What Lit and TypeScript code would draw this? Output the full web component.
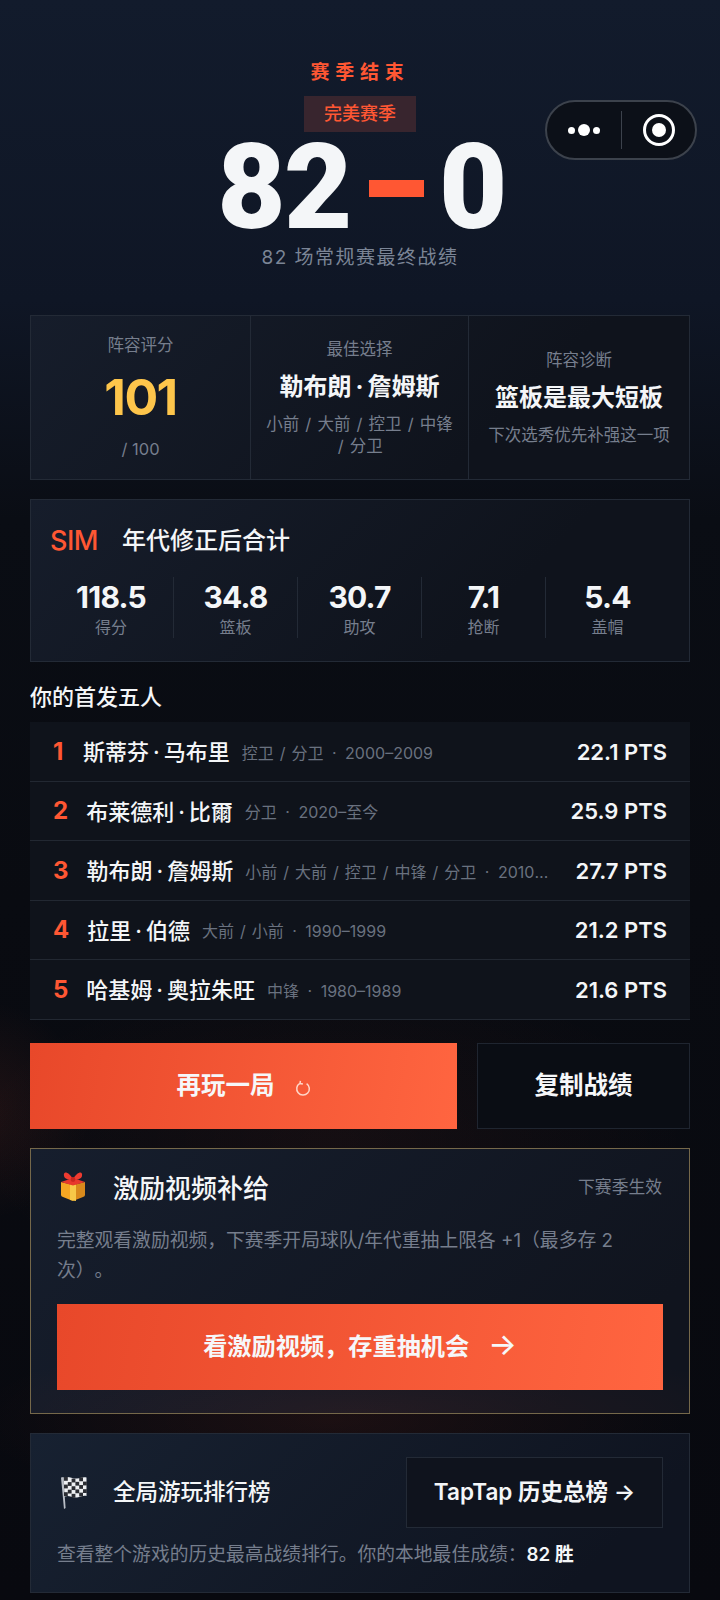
import { LitElement, html, css, svg } from "lit";
import { customElement } from "lit/decorators.js";

const players = [
  { n: "斯蒂芬·马布里", m: "控卫 / 分卫 · 2000–2009", p: "22.1 PTS" },
  { n: "布莱德利·比爾", m: "分卫 · 2020–至今", p: "25.9 PTS" },
  { n: "勒布朗·詹姆斯", m: "小前 / 大前 / 控卫 / 中锋 / 分卫 · 2010–2019", p: "27.7 PTS" },
  { n: "拉里·伯德", m: "大前 / 小前 · 1990–1999", p: "21.2 PTS" },
  { n: "哈基姆·奥拉朱旺", m: "中锋 · 1980–1989", p: "21.6 PTS" },
];
const stats = [
  ["118.5", "得分"],
  ["34.8", "篮板"],
  ["30.7", "助攻"],
  ["7.1", "抢断"],
  ["5.4", "盖帽"],
];

/* The CJK font in the reference sets "·" and "/" wider than Inter does. */
const spaced = (text: string) =>
  text.split(/([·/])/).map((part) =>
    part === "·"
      ? html`<span class="mid">·</span>`
      : part === "/"
      ? html`<span class="slash">/</span>`
      : part
  );

const gift = svg`<svg class="emoji" viewBox="0 0 28 32" width="28" height="32">
  <path d="M2 12 L14 15 L14 31 L4 27 Q2 26.5 2 25 Z" fill="#f5a623"/>
  <path d="M26 12 L14 15 L14 31 L24 27 Q26 26.5 26 25 Z" fill="#d98a1c"/>
  <path d="M11 14.2 L17 14.2 L17 31 L11 30 Z" fill="#f7c948"/>
  <path d="M2 12 L14 8 L26 12 L14 15.5 Z" fill="#e8382c"/>
  <path d="M14 9 C9 1 4 1 5 6 C5.5 9 10 10 14 10 C18 10 22.5 9 23 6 C24 1 19 1 14 9 Z" fill="#ef3b30"/>
  <circle cx="14" cy="9.5" r="2.4" fill="#c9261f"/>
</svg>`;

const flagCells = () => {
  const out = [];
  for (let r = 0; r < 5; r++) {
    for (let c = 0; c < 6; c++) {
      if ((r + c) % 2 === 0) {
        const x = 5 + c * 3.8;
        const wave = Math.sin(c * 1.05) * 1.1;
        const y = 2 + r * 3.8 + c * 0.35 + wave;
        out.push(svg`<rect x="${x}" y="${y}" width="3.8" height="3.8" fill="#2b2d33"/>`);
      }
    }
  }
  return out;
};
const flag = svg`<svg class="emoji" viewBox="0 0 28 36" width="28" height="36">
  <path d="M2 2.5 L4.4 2 L6.6 33 L5 34 Z" fill="#b9bec6"/>
  <path d="M4.5 2.5 C10 0.5 13 4 18 3.5 C22 3.2 24 1.6 27.5 2.5 L27.5 21 C24 20 22 22 18 22.4 C13 23 10 19.6 5.6 21.5 Z" fill="#eef0f3"/>
  ${flagCells()}
</svg>`;

const replay = svg`<svg class="spin" viewBox="0 0 16 16" width="16" height="16" fill="none" stroke="#ffd6c8" stroke-width="1.5">
  <path d="M4.8 3.4 A6.3 6.3 0 1 0 11.6 3.6"/>
  <path d="M5.4 0.8 L5 3.6 L7.9 4.1"/>
</svg>`;

@customElement("app-root")
export class AppRoot extends LitElement {
  static styles = css`
    :host {
      display: block;
      width: 720px;
      height: 1600px;
      overflow: hidden;
      font-family: Inter, "Noto Sans CJK SC", sans-serif;
      color: #f4f6f8;
    }
    * { box-sizing: border-box; }
    .mid { margin: 0 4px; }
    .slash { margin: 0 1.5px; }
    .page {
      position: relative;
      height: 1600px;
      padding: 60px 30px 0;
      background:
        radial-gradient(circle at -20px 1110px, rgba(255, 87, 51, 0.09), transparent 110px),
        radial-gradient(ellipse 360px 170px at 330px 1140px, rgba(255, 87, 51, 0.05), transparent 100%),
        radial-gradient(ellipse 360px 90px at 330px 1420px, rgba(255, 87, 51, 0.08), transparent 100%),
        linear-gradient(180deg, #121b2c 0, #0f1625 300px, #0a0d14 520px, #090b11 900px, #08090f 1600px);
    }
    .capsule {
      position: absolute;
      left: 545px;
      top: 100px;
      width: 152px;
      height: 60px;
      border-radius: 30px;
      border: 2px solid #3c424c;
      background: #0c1018;
      display: flex;
      align-items: center;
    }
    .capsule .dots { width: 74px; display: flex; justify-content: center; align-items: center; gap: 3px; }
    .capsule .dot { width: 7px; height: 7px; border-radius: 50%; background: #fff; }
    .capsule .dot.big { width: 12px; height: 12px; }
    .capsule .sep { width: 1px; height: 38px; background: #3c424c; }
    .capsule .rec { flex: 1; display: flex; justify-content: center; }
    .capsule .ring { width: 32px; height: 32px; border-radius: 50%; border: 3px solid #fff; display: flex; align-items: center; justify-content: center; }
    .capsule .ring i { width: 14px; height: 14px; border-radius: 50%; background: #fff; display: block; }

    .hero { display: flex; flex-direction: column; align-items: center; height: 255px; }
    .eyebrow { font-size: 19px; line-height: 26px; font-weight: 700; letter-spacing: 5.7px; color: #ff5733; }
    .badge { margin-top: 10px; height: 36px; padding: 0 20px; font-size: 18px; line-height: 36px; font-weight: 500; color: #ff5733; background: #38252e; }
    .score { display: flex; align-items: center; font-family: Roboto, Inter, sans-serif; font-size: 118px; line-height: 106px; font-weight: 900; letter-spacing: -1.5px; color: #f4f6f8; margin-left: 3px; height: 106px; margin-top: 3px; }
    .dash { width: 55px; height: 17px; background: #ff5733; margin: 0 15px 0 18px; }
    .sub { font-size: 19px; line-height: 28px; letter-spacing: 1.5px; color: #7b8596; margin-top: 3px; }

    .summary {
      display: grid;
      grid-template-columns: 219px 218px 1fr;
      height: 165px;
      border: 1px solid #232a36;
      background: linear-gradient(135deg, #161d2b, #0f131c 70%);
    }
    .summary > div { display: flex; flex-direction: column; align-items: center; justify-content: center; text-align: center; padding: 0 14px 2px; }
    .summary > div + div { border-left: 1px solid #232a36; }
    .label { font-size: 16.5px; line-height: 24px; color: #767e8d; }
    .rating { font-size: 50px; line-height: 60px; margin: 10px 0; font-weight: 700; color: #fdc54b; letter-spacing: -1.5px; }
    .of { font-size: 16.5px; line-height: 24px; color: #767e8d; }
    .pick { font-size: 24px; line-height: 32px; font-weight: 700; margin: 10px 0 10px; color: #f4f6f8; }
    .desc { font-size: 16.5px; line-height: 22px; color: #767e8d; }

    .sim {
      margin-top: 19px;
      height: 163px;
      border: 1px solid #232a36;
      padding: 20px 18px 0;
      background: linear-gradient(135deg, #161d2b, #0f131c 70%);
    }
    .sim-head { display: flex; align-items: center; gap: 24px; height: 40px; padding: 0 0 3px 1px; }
    .sim-tag { font-size: 27px; font-weight: 500; color: #ff5733; letter-spacing: -0.5px; padding-top: 3px; }
    .sim-title { font-size: 24px; font-weight: 500; color: #f4f6f8; }
    .cells { display: grid; grid-template-columns: repeat(5, 124px); margin-top: 17px; height: 61px; }
    .cell { display: flex; flex-direction: column; align-items: center; }
    .cell + .cell { border-left: 1px solid #232a36; }
    .cell b { font-size: 30px; line-height: 38px; font-weight: 700; letter-spacing: -0.8px; padding-top: 1px; }
    .cell span { font-size: 16px; line-height: 22px; color: #767e8d; }

    .h2 { margin-top: 20px; height: 40px; font-size: 22px; line-height: 30px; font-weight: 500; }

    .list { display: flex; flex-direction: column; }
    .row {
      height: 59.5px;
      display: flex;
      align-items: center;
      padding: 0 23px 2px;
      background: #0f131b;
      border-bottom: 1px solid #222832;
    }
    .rank { font-size: 24px; font-weight: 700; color: #ff5733; min-width: 12px; margin-right: 18px; padding-top: 2px; }
    .row .name { font-size: 22px; font-weight: 500; white-space: nowrap; margin-right: 12px; }
    .row .meta { flex: 1; min-width: 0; font-size: 16px; color: #69717f; white-space: nowrap; overflow: hidden; text-overflow: ellipsis; padding-top: 3px; }
    .row .pts { font-size: 22px; font-weight: 600; margin-left: 24px; white-space: nowrap; padding-top: 3px; }

    .actions { display: grid; grid-template-columns: 427px 1fr; gap: 20px; margin-top: 23px; height: 86px; }
    .btn { display: flex; align-items: center; justify-content: center; padding-bottom: 5px; font-size: 24.5px; font-weight: 700; color: #f6f7f9; }
    .primary { background: linear-gradient(100deg, #e8482a, #ff6540); }
    .ghost { border: 1px solid #1f2530; background: #0a0d14; }
    .spin { margin-left: 20px; margin-top: 10px; }

    .card { border: 1px solid #232a36; background: linear-gradient(135deg, #172030, #0f131c 80%); padding: 0 26px; }
    .reward {
      margin-top: 19px;
      height: 266px;
      border-color: #75684a;
      padding-top: 18px;
      background:
        radial-gradient(ellipse 420px 70px at 50% 100%, rgba(255, 87, 51, 0.08), transparent 100%),
        linear-gradient(135deg, #161e2d, #10141e 85%);
    }
    .head { display: flex; align-items: center; height: 44px; padding-bottom: 5px; }
    .emoji { flex: none; margin-right: 26px; margin-left: 2px; }
    .reward-title { font-size: 26px; font-weight: 500; flex: 1; }
    .note { font-size: 16.8px; color: #767e8d; padding-right: 1px; }
    .copy { margin-top: 15px; font-size: 18.8px; line-height: 30px; color: #767e8d; width: 572px; text-spacing-trim: space-all; }
    .cta { margin-top: 18px; height: 86px; gap: 19px; font-size: 24.2px; }
    .cta span { font-size: 30px; font-weight: 500; line-height: 30px; }

    .board { margin-top: 19px; height: 160px; padding-top: 23px; background: linear-gradient(135deg, #172131, #0f1420 85%); }
    .board-top { display: flex; align-items: center; height: 72px; }
    .board-title { font-size: 22.5px; font-weight: 500; flex: 1; padding-bottom: 5px; }
    .tap { width: 257px; height: 71px; padding-bottom: 5px; border: 1px solid #232a36; background: #0f131d; display: flex; align-items: center; justify-content: center; font-size: 22.5px; font-weight: 600; white-space: nowrap; }
    .board-desc { margin-top: 11px; font-size: 18.8px; line-height: 30px; color: #767e8d; }
    .board-desc b { color: #f4f6f8; font-weight: 600; }
  `;

  render() {
    return html`<div class="page">
      <div class="capsule">
        <div class="dots"><i class="dot"></i><i class="dot big"></i><i class="dot"></i></div>
        <div class="sep"></div>
        <div class="rec"><div class="ring"><i></i></div></div>
      </div>

      <section class="hero">
        <div class="eyebrow">赛季结束</div>
        <div class="badge">完美赛季</div>
        <div class="score"><span>82</span><i class="dash"></i><span>0</span></div>
        <div class="sub">82 场常规赛最终战绩</div>
      </section>

      <section class="summary">
        <div>
          <span class="label">阵容评分</span>
          <span class="rating">101</span>
          <span class="of">/ 100</span>
        </div>
        <div>
          <span class="label">最佳选择</span>
          <span class="pick">${spaced("勒布朗·詹姆斯")}</span>
          <span class="desc">${spaced("小前 / 大前 / 控卫 / 中锋 / 分卫")}</span>
        </div>
        <div>
          <span class="label">阵容诊断</span>
          <span class="pick">篮板是最大短板</span>
          <span class="desc">下次选秀优先补强这一项</span>
        </div>
      </section>

      <section class="sim">
        <div class="sim-head"><span class="sim-tag">SIM</span><span class="sim-title">年代修正后合计</span></div>
        <div class="cells">
          ${stats.map(([v, l]) => html`<div class="cell"><b>${v}</b><span>${l}</span></div>`)}
        </div>
      </section>

      <div class="h2">你的首发五人</div>
      <section class="list">
        ${players.map(
          (p, i) => html`<div class="row">
            <span class="rank">${i + 1}</span>
            <span class="name">${spaced(p.n)}</span>
            <span class="meta">${spaced(p.m)}</span>
            <span class="pts">${p.p}</span>
          </div>`
        )}
      </section>

      <section class="actions">
        <div class="btn primary">再玩一局${replay}</div>
        <div class="btn ghost">复制战绩</div>
      </section>

      <section class="card reward">
        <div class="head">
          ${gift}
          <span class="reward-title">激励视频补给</span>
          <span class="note">下赛季生效</span>
        </div>
        <div class="copy">完整观看激励视频，下赛季开局球队/年代重抽上限各 +1（最多存 2 次）。</div>
        <div class="btn primary cta">看激励视频，存重抽机会<span>→</span></div>
      </section>

      <section class="card board">
        <div class="board-top">
          ${flag}
          <span class="board-title">全局游玩排行榜</span>
          <div class="tap">TapTap 历史总榜 →</div>
        </div>
        <div class="board-desc">查看整个游戏的历史最高战绩排行。你的本地最佳成绩：<b>82 胜</b></div>
      </section>
    </div>`;
  }
}
